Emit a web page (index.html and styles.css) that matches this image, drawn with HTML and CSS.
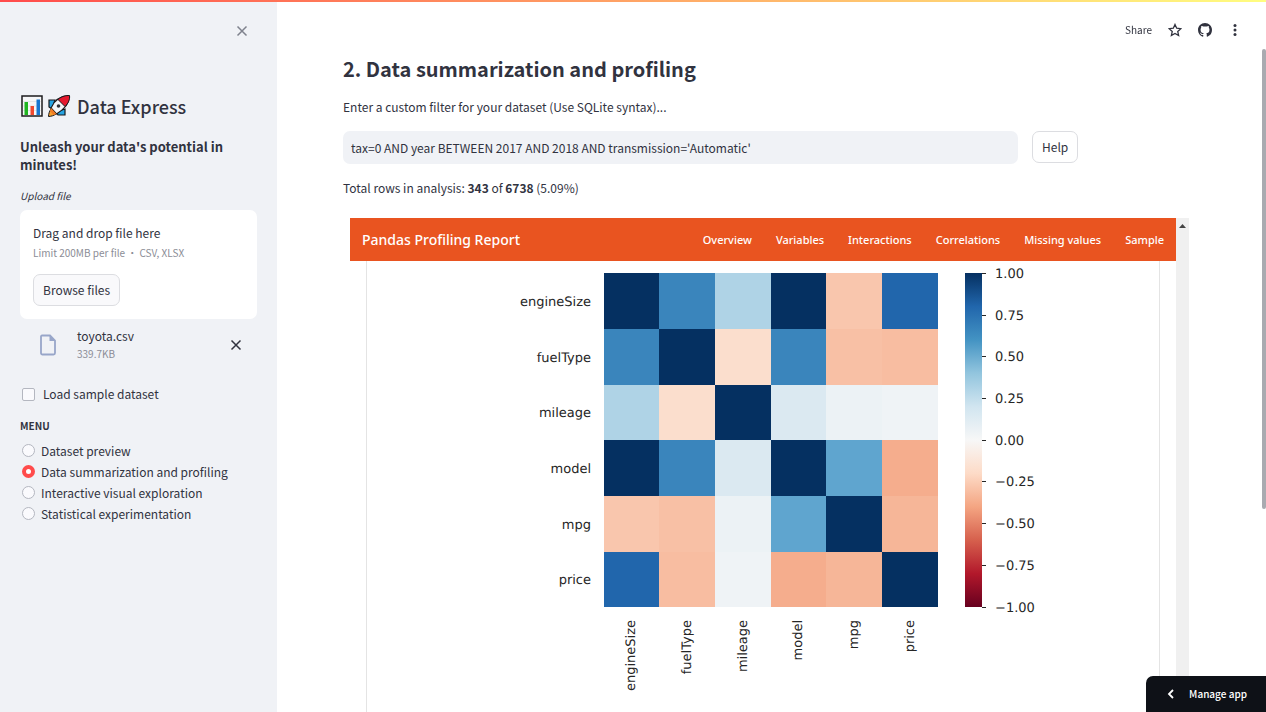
FILE: index.html
```html
<!DOCTYPE html>
<html lang="en">
<head>
<meta charset="utf-8">
<meta name="viewport" content="width=device-width, initial-scale=1">
<title>Data Express</title>
<link rel="stylesheet" href="styles.css">
</head>
<body>
<div class="decoration"></div>
<div class="app">
  <aside class="sidebar">
    <div class="sidebar-top">
      <button class="icon-button muted" aria-label="Close sidebar">
        <svg width="12" height="12" viewBox="0 0 12 12"><path d="M1.5 1.5l9 9M10.500 1.500l-9 9" fill="none" stroke="currentColor" stroke-width="1.500"/></svg>
      </button>
    </div>
    <h1 class="brand">
      <svg width="24" height="24" viewBox="0 0 24 24" aria-hidden="true">
        <rect x="2" y="2" width="20" height="20" fill="#f6f7f8" stroke="#1c1c1e" stroke-width="1.500"/>
        <path d="M3 7.500h18M3 12h18M3 16.500h18" stroke="#dcdfe3" stroke-width=".7"/>
        <path d="M4.500 8h3.500v13H4.500z" fill="#1fb520"/><path d="M10.500 12h3.500v9h-3.500z" fill="#f0492f"/><path d="M16.500 5.500H20V21h-3.500z" fill="#1777d1"/>
      </svg>
      <svg width="24" height="24" viewBox="0 0 24 24" aria-hidden="true">
        <path d="M8 6H2v7l3 2zM18 15v6h-7l-2-3z" fill="#27a4e2" stroke="#17191c" stroke-width="1.200"/>
        <path d="M4 15c-1.500 2-2.500 5-2.500 7.500C4 22.500 7 21.500 9 20z" fill="#f9a02c" stroke="#17191c"/>
        <path d="M4 14C7 7 12 2 21.500 1.500 23.500 9 16 16 9.500 20z" fill="#f4f6f8" stroke="#17191c" stroke-width="1.200"/>
        <path d="M11 5.500C15 2 19 1.500 22.500 1.500c.5 4-1 7.500-4.500 11z" fill="#e6192e" stroke="#17191c"/>
        <circle cx="11.500" cy="12" r="1.800" fill="#30343a"/><path d="M4 14l5.500 6-3 1-3.500-4z" fill="#f17c25"/>
      </svg>
      <span>Data Express</span>
    </h1>
    <h2 class="tagline">Unleash your data's potential in minutes!</h2>
    <p class="upload-label"><em>Upload file</em></p>
    <section class="dropzone">
      <div class="drop-title">Drag and drop file here</div>
      <div class="small">Limit 200MB per file • CSV, XLSX</div>
      <button class="button browse">Browse files</button>
    </section>
    <div class="file">
      <svg class="file-icon" width="18" height="22" viewBox="0 0 18 22" aria-hidden="true"><path d="M3 1.500h8l5 5V19a1.500 1.500 0 0 1-1.500 1.500h-11A1.500 1.500 0 0 1 2 19V2.500a1 1 0 0 1 1-1z" fill="none" stroke="#98a6c9" stroke-width="1.800"/><path d="M10.500 1.500V7H16z" fill="#98a6c9"/></svg>
      <div class="file-name"><div>toyota.csv</div><div class="small">339.7KB</div></div>
      <button class="icon-button" aria-label="Remove toyota.csv">
        <svg width="12" height="12" viewBox="0 0 12 12"><path d="M1.500 1.500l9 9M10.500 1.500l-9 9" fill="none" stroke="currentColor" stroke-width="1.500"/></svg>
      </button>
    </div>
    <label class="check"><input type="checkbox">Load sample dataset</label>
    <fieldset class="menu">
      <legend>MENU</legend>
      <label><input type="radio" name="menu">Dataset preview</label>
      <label><input type="radio" name="menu" checked>Data summarization and profiling</label>
      <label><input type="radio" name="menu">Interactive visual exploration</label>
      <label><input type="radio" name="menu">Statistical experimentation</label>
    </fieldset>
  </aside>

  <main class="main">
    <h2 class="page-title">2. Data summarization and profiling</h2>
    <label class="filter-label" for="filter">Enter a custom filter for your dataset (Use SQLite syntax)...</label>
    <div class="filter-row">
      <input id="filter" class="filter" type="text" value="tax=0 AND year BETWEEN 2017 AND 2018 AND transmission='Automatic'">
      <div class="help"><button class="button">Help</button></div>
    </div>
    <p class="total">Total rows in analysis: <b>343</b> of <b>6738</b> (5.09%)</p>
    <div class="frame">
      <div class="report">
        <nav class="navbar">
          <a class="nav-brand" href="#">Pandas Profiling Report</a>
          <a href="#overview">Overview</a>
          <a href="#variables">Variables</a>
          <a href="#interactions">Interactions</a>
          <a href="#correlations">Correlations</a>
          <a href="#missing">Missing values</a>
          <a href="#sample">Sample</a>
        </nav>
        <div class="report-body">
          <svg class="chart" viewBox="367 261 792 470" role="img" aria-label="Correlation heatmap">
            <defs>
              <linearGradient id="scale" x1="0" y1="0" x2="0" y2="1">
                <stop offset="0" stop-color="#053061"/><stop offset=".1" stop-color="#2166ac"/><stop offset=".2" stop-color="#4393c3"/><stop offset=".3" stop-color="#92c5de"/><stop offset=".4" stop-color="#d1e5f0"/><stop offset=".5" stop-color="#f7f7f7"/><stop offset=".6" stop-color="#fddbc7"/><stop offset=".7" stop-color="#f4a582"/><stop offset=".8" stop-color="#d6604d"/><stop offset=".9" stop-color="#b2182b"/><stop offset="1" stop-color="#67001f"/>
              </linearGradient>
            </defs>
            <g id="cells" shape-rendering="crispEdges"></g>
            <rect x="965" y="273" width="17" height="334" fill="url(#scale)"/>
            <g id="labels" class="chart-text"></g>
          </svg>
        </div>
      </div>
      <div class="frame-scroll"><svg width="7" height="4" viewBox="0 0 7 4"><path d="M0 4l3.500-4L7 4z" fill="#444"/></svg></div>
    </div>
  </main>
</div>

<header class="toolbar">
  <button class="share">Share</button>
  <button class="icon-button" aria-label="Favorite"><svg width="14" height="14" viewBox="0 0 24 24"><path d="M12 2.500l2.900 6.500 7.100.7-5.300 4.800 1.500 7L12 17.900l-6.200 3.600 1.500-7L2 9.700 9.100 9z" fill="none" stroke="currentColor" stroke-width="2.200"/></svg></button>
  <button class="icon-button" aria-label="View source on GitHub"><svg width="14" height="14" viewBox="0 0 16 16"><path fill="currentColor" d="M8 0C3.580 0 0 3.580 0 8c0 3.540 2.290 6.530 5.470 7.590.4.070.55-.17.55-.38 0-.19-.01-.82-.01-1.490-2.010.37-2.530-.49-2.690-.94-.09-.23-.48-.94-.82-1.130-.28-.15-.68-.52-.01-.53.63-.01 1.080.58 1.230.82.72 1.210 1.870.87 2.330.66.07-.52.28-.87.51-1.070-1.780-.2-3.640-.89-3.640-3.950 0-.87.31-1.590.82-2.150-.08-.2-.36-1.020.08-2.120 0 0 .67-.21 2.200.82.64-.18 1.320-.27 2-.27s1.360.09 2 .27c1.530-1.040 2.200-.82 2.200-.82.44 1.100.16 1.920.08 2.120.51.56.82 1.270.82 2.150 0 3.070-1.870 3.750-3.650 3.950.29.25.54.73.54 1.480 0 1.070-.01 1.930-.01 2.200 0 .21.15.46.55.38A8.010 8.010 0 0 0 16 8c0-4.420-3.580-8-8-8z"/></svg></button>
  <button class="icon-button" aria-label="More options"><svg width="14" height="14" viewBox="0 0 14 14" fill="currentColor"><circle cx="7" cy="2.500" r="1.500"/><circle cx="7" cy="7" r="1.500"/><circle cx="7" cy="11.500" r="1.500"/></svg></button>
</header>
<div class="page-scroll"></div>
<button class="manage"><svg width="8" height="10" viewBox="0 0 8 10"><path d="M6 1L2 5l4 4" fill="none" stroke="#fff" stroke-width="1.800"/></svg>Manage app</button>
<script src="chart.js"></script>
</body>
</html>
```
FILE: styles.css
```css
* { box-sizing: border-box; }
body {
  margin: 0;
  background: #fff;
  color: #31333f;
  font: 12px/20px "Noto Sans CJK SC", "Noto Sans", sans-serif;
}
h1, h2, p, fieldset, legend { margin: 0; padding: 0; border: 0; }
button, input { font: inherit; color: inherit; }
button { cursor: pointer; }
svg { display: block; flex: none; }

.decoration {
  position: fixed;
  inset: 0 0 auto;
  z-index: 3;
  height: 2px;
  background: linear-gradient(90deg, #ff4b4b, #fffd80);
}
.app { display: flex; height: 100vh; overflow: hidden; }

.icon-button {
  display: grid;
  place-items: center;
  width: 14px;
  height: 14px;
  padding: 0;
  border: 0;
  background: none;
}
.muted { color: #7f828d; }
.button {
  height: 32px;
  padding: 0 9px;
  border: 1px solid #dcdde1;
  border-radius: 7px;
  background: #fff;
}

.sidebar { flex: none; width: 277px; padding: 24px 20px; background: #f0f2f6; }
.sidebar-top { display: flex; justify-content: flex-end; height: 70px; padding-right: 8px; }
.brand { display: flex; align-items: center; gap: 3px; font-size: 18px; font-weight: 500; line-height: 24px; }
.brand span { padding-left: 3px; }
.tagline { margin-top: 20px; font-size: 13px; font-weight: 600; line-height: 18px; }
.upload-label { margin-top: 14px; font-size: 10px; line-height: 16px; }
.dropzone { margin-top: 6px; padding: 13px; border-radius: 7px; background: #fff; }
.small { color: #8b8d96; font-size: 10px; }
.browse { display: block; margin-top: 11px; background: #f9f9fb; }
.file { display: flex; align-items: center; padding: 8px 14px 0 19px; line-height: 18px; }
.file-name { flex: 1; padding-left: 20px; }
.check { display: flex; align-items: center; gap: 8px; margin-top: 21px; padding-left: 2px; }
.check input, .menu input {
  appearance: none;
  flex: none;
  width: 13px;
  height: 13px;
  margin: 0;
  border: 1px solid #b4b7c0;
  border-radius: 2px;
  background: #fafafd;
}
.menu { margin-top: 14px; }
.menu legend { margin-bottom: 6px; font-size: 10px; font-weight: 600; line-height: 16px; }
.menu label { display: flex; align-items: center; gap: 6px; padding-left: 2px; line-height: 21px; }
.menu input { border-radius: 50%; }
.menu input:checked { border: 4px solid #ff4b4b; background: #fff; }

.main { flex: 1; min-width: 0; padding: 55px 77px 0 66px; }
.page-title { font-size: 20px; font-weight: 600; line-height: 28px; }
.filter-label { display: block; margin: 14px 0; }
.filter-row { display: flex; gap: 14px; }
.filter { flex: 21; min-width: 0; height: 33px; padding: 0 8px; border: 0; border-radius: 7px; background: #f0f2f6; }
.help { flex: 5; }
.total { margin: 14px 0 20px; }
.frame { display: flex; padding-left: 7px; }
.report { flex: 1; min-width: 0; }
.navbar {
  display: flex;
  align-items: center;
  gap: 24px;
  height: 43px;
  padding: 0 12px;
  background: #e95420;
  font-family: "Noto Sans", sans-serif;
  font-size: 11px;
  font-weight: 500;
}
.navbar a { color: #fff; text-decoration: none; white-space: nowrap; }
.navbar .nav-brand { margin-right: auto; font-size: 14px; }
.report-body { margin: 0 16px; border: solid #e4e4e4; border-width: 0 1px; }
.chart { width: 100%; }
.chart-text { fill: #262626; font: 13px "DejaVu Sans", sans-serif; text-rendering: geometricPrecision; }
.frame-scroll { width: 13px; padding: 6px 3px; background: #f0f0f0; }

.toolbar { position: fixed; top: 20px; right: 24px; display: flex; align-items: center; gap: 16px; }
.share { padding: 0; border: 0; background: none; font-size: 10px; }
.page-scroll { position: fixed; top: 49px; right: 0; width: 4px; height: 460px; border-radius: 2px; background: #a9aab0; }
.manage {
  position: fixed;
  right: 0;
  bottom: 0;
  display: flex;
  align-items: center;
  gap: 14px;
  height: 36px;
  padding: 0 19px 0 21px;
  border: 0;
  border-radius: 7px 0 0 0;
  background: #0e1117;
  color: #fff;
  font-size: 10px;
  font-weight: 500;
}
```
FILE: chart.js
```javascript
const names = ["engineSize", "fuelType", "mileage", "model", "mpg", "price"];
const colors = [
  ["#053061", "#3a85bc", "#afd3e6", "#053061", "#f9c6ad", "#2166ac"],
  ["#3a85bc", "#053061", "#fbdecd", "#3a85bc", "#f8c0a5", "#f8bda1"],
  ["#afd3e6", "#fbdecd", "#053061", "#dbe9f1", "#ecf2f5", "#eff3f6"],
  ["#053061", "#3a85bc", "#dbe9f1", "#053061", "#5fa5cf", "#f5ad8d"],
  ["#f9c6ad", "#f8c0a5", "#ecf2f5", "#5fa5cf", "#053061", "#f6b698"],
  ["#2166ac", "#f8bda1", "#eff3f6", "#f5ad8d", "#f6b698", "#053061"]
];
const xs = [604, 659, 715, 771, 826, 882, 938];
const ys = [273, 329, 385, 440, 496, 552, 607];
const ns = "http://www.w3.org/2000/svg";

function add(parent, tag, attrs, text) {
  const el = document.createElementNS(ns, tag);
  for (const key in attrs) el.setAttribute(key, attrs[key]);
  if (text) el.textContent = text;
  parent.appendChild(el);
}

const cells = document.getElementById("cells");
const labels = document.getElementById("labels");

colors.forEach((row, r) => row.forEach((fill, c) => {
  add(cells, "rect", { x: xs[c], y: ys[r], width: xs[c + 1] - xs[c], height: ys[r + 1] - ys[r], fill });
}));

names.forEach((name, i) => {
  const cy = Math.floor((ys[i] + ys[i + 1]) / 2);
  const cx = Math.floor((xs[i] + xs[i + 1]) / 2);
  add(labels, "text", { x: 591, y: cy + 5, "text-anchor": "end" }, name);
  add(labels, "text", { transform: `translate(${cx + 4} 620) rotate(-90)`, "text-anchor": "end" }, name);
});

["1.00", "0.75", "0.50", "0.25", "0.00", "−0.25", "−0.50", "−0.75", "−1.00"].forEach((value, i) => {
  const y = Math.round(273 + i * 333.5 / 8);
  add(labels, "rect", { x: 982, y: y, width: 4, height: 1 });
  add(labels, "text", { x: 995, y: y + 5 }, value);
});
```
